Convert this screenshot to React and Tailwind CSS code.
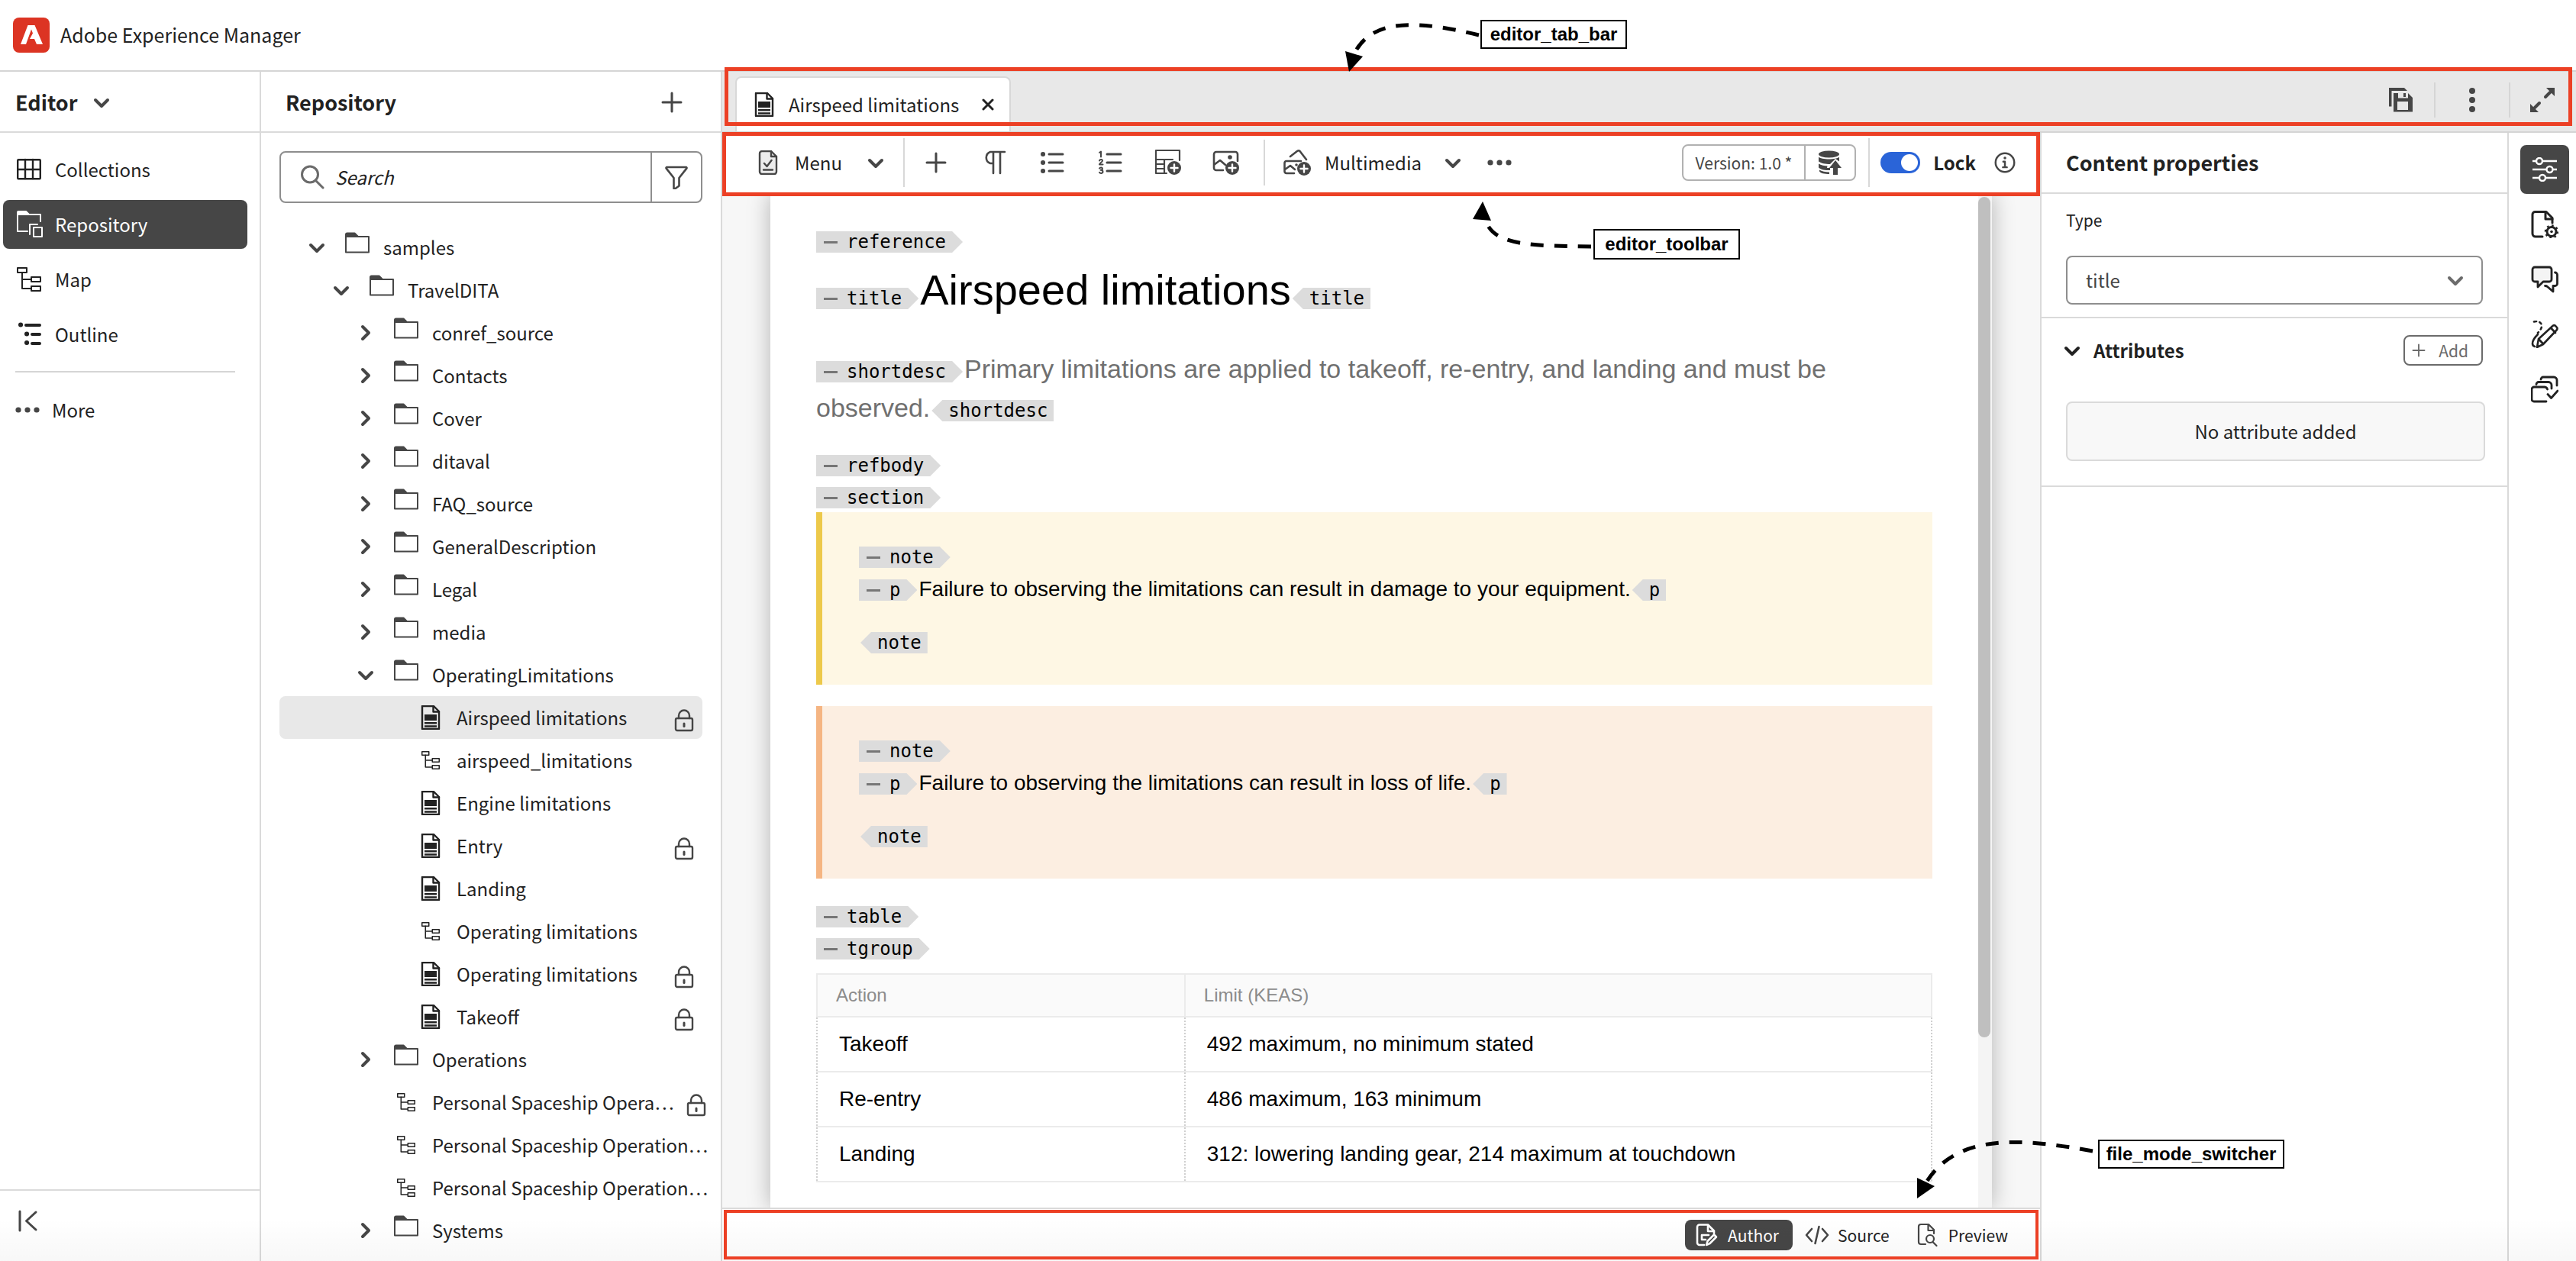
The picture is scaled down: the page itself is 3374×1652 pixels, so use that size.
import React from "react";

/* ---------- icons ---------- */

function Svg({ size = "size-8", box = 32, w = 2, children, className = "" }) {
  return (
    <svg
      viewBox={`0 0 ${box} ${box}`}
      fill="none"
      stroke="currentColor"
      strokeWidth={w}
      strokeLinecap="round"
      strokeLinejoin="round"
      aria-hidden="true"
      className={`${size} shrink-0 ${className}`}
    >
      {children}
    </svg>
  );
}

const ChevronDown = ({ className = "" }) => (
  <Svg size="size-6" box={24} w={4} className={className}>
    <path d="M4 9l8 8 8-8" />
  </Svg>
);
const ChevronRight = () => (
  <Svg size="size-6" box={24} w={4}>
    <path d="M8 4l8 8-8 8" />
  </Svg>
);
const Plus = ({ className = "", size = "size-8" }) => (
  <Svg className={className} size={size} w={3}>
    <path d="M16 4v24M4 16h24" />
  </Svg>
);
const GridIcon = () => (
  <Svg w={2.4}>
    <rect x="1.2" y="3.2" width="29.6" height="25" rx="1" />
    <path d="M11 3v25M21 3v25M1 16h30" />
  </Svg>
);
const RepoIcon = () => (
  <Svg size="h-9 w-9" box={36} w={2}>
    <path d="M1 2a1 1 0 0 1 1-1h10l4 4H1z" fill="currentColor" />
    <path d="M14 27H1V5h30v9" />
    <path d="M17 31V18h10" />
    <rect x="22" y="22" width="11" height="12" />
  </Svg>
);
const MapIcon = ({ size = "size-8" }) => (
  <Svg size={size}>
    <rect x="1" y="1" width="12" height="6" />
    <rect x="19" y="13" width="12" height="6" />
    <rect x="19" y="25" width="12" height="6" />
    <path d="M7 7v21h12M7 16h12" />
  </Svg>
);
const OutlineIcon = () => (
  <Svg w={4}>
    <path d="M12 4h18M20 16h10M20 28h10" />
    <path d="M5 3.5h.1M13 15.500h.1M13 27h.1" strokeWidth="6" />
  </Svg>
);
const Dots = ({ className = "" }) => (
  <Svg className={className}>
    <g fill="currentColor" stroke="none">
      <circle cx="4" cy="16" r="3.600" />
      <circle cx="16" cy="16" r="3.600" />
      <circle cx="28" cy="16" r="3.600" />
    </g>
  </Svg>
);
const FolderIcon = () => (
  <Svg>
    <path d="M1 3a1.500 1.500 0 0 1 1.500-1.500h10L17 6H1z" fill="currentColor" />
    <path d="M1 6h30v20.500H1z" />
  </Svg>
);
const DocIcon = () => (
  <Svg w={2.400}>
    <path d="M5 1h15l7 7v23H5z" />
    <path d="M19.500 1v7.500H27" />
    <path d="M8 23.200h16M8 27.500h16" strokeLinecap="butt" />
    <path d="M8 12h16v8H8z" fill="currentColor" stroke="none" />
  </Svg>
);
const LockIcon = () => (
  <Svg w={2.400}>
    <path d="M9 13V9.500a7 7 0 0 1 14 0V13" />
    <rect x="5" y="13" width="22" height="16" rx="2" />
    <path d="M16 20v3.500" strokeWidth="3" />
  </Svg>
);
const SearchIcon = () => (
  <Svg w={3}>
    <circle cx="13" cy="12.500" r="10.500" />
    <path d="M20.500 20.500l9.500 9.500" />
  </Svg>
);
const FilterIcon = () => (
  <Svg w={2.600}>
    <path d="M3.500 3h25a1 1 0 0 1 .8 1.600L19.500 17v10.500l-5 3.500h-2V17L2.700 4.600A1 1 0 0 1 3.500 3z" />
  </Svg>
);
const CollapseIcon = () => (
  <Svg w={3}>
    <path d="M5 3v25M26 4L13.500 15.500 26 27" />
  </Svg>
);
const CloseIcon = () => (
  <Svg size="size-4" box={16} w={3}>
    <path d="M2 2l12 12M14 2L2 14" />
  </Svg>
);
const SaveAllIcon = () => (
  <Svg w={0}>
    <g fill="currentColor" stroke="none">
      <path d="M1 0h20l4 4H4.500v20.500H1z" />
      <path fillRule="evenodd" d="M7 7h6v6.500h13V7l6 6v18.500H7zM12 18v11h14V18z" />
      <path d="M20 7h3v5h-3z" />
    </g>
  </Svg>
);
const MoreVertical = () => (
  <Svg>
    <g fill="currentColor" stroke="none">
      <circle cx="16" cy="4" r="4" />
      <circle cx="16" cy="16" r="4" />
      <circle cx="16" cy="28" r="4" />
    </g>
  </Svg>
);
const ExpandIcon = () => (
  <Svg w={4}>
    <path d="M21 0h11v11zM11 32H0V21z" fill="currentColor" stroke="none" />
    <path d="M20 12l6-6M12 20l-6 6" />
  </Svg>
);
const MenuDocIcon = () => (
  <Svg w={2.400}>
    <path d="M5 4a3 3 0 0 1 3-3h12l7 7v20a3 3 0 0 1-3 3H8a3 3 0 0 1-3-3z" fill="#ececec" />
    <path d="M20 1v7h7M11 17l3.500 4 6-8M10 25.500h12" />
  </Svg>
);
const PilcrowIcon = () => (
  <Svg w={2.600}>
    <path d="M30 2H11a8 8 0 0 0 0 15h4M15 2v28M24 2v28" />
  </Svg>
);
const BulletIcon = () => (
  <Svg w={3}>
    <path d="M12 5h18M12 16h18M12 27h18" />
    <path d="M4 5h.1M4 16h.1M4 27h.1" strokeWidth="6" />
  </Svg>
);
const NumberIcon = () => (
  <Svg w={2}>
    <path d="M12 5h18M12 16h18M12 27h18" strokeWidth="3" />
    <path d="M2 3l2-1.500V8.500M2 13.500c.5-2 4-2 4 0 0 2-4 3-4 5h4.500M2 23.500c1-1.500 4-1.500 4 .5 0 1.500-1.500 1.800-2.500 1.800 1 0 3 .3 3 2.200 0 2.300-3.500 2.500-4.500.8" />
  </Svg>
);
const PlusBadge = ({ cx, cy }) => (
  <>
    <circle cx={cx} cy={cy} r="9" fill="currentColor" stroke="none" />
    <path d={`M${cx - 4.5} ${cy}h9M${cx} ${cy - 4.5}v9`} stroke="#fff" strokeWidth="2.4" />
  </>
);
const TableIcon = () => (
  <Svg size="size-9" box={36} w={2.200}>
    <path d="M16 32H2V2h31v13M2 14h22M13 14v18M2 20h11M2 26h11" />
    <PlusBadge cx={26} cy={25} />
  </Svg>
);
const ImageIcon = () => (
  <Svg size="size-9" box={36} w={2.600}>
    <path d="M14 28H5a3 3 0 0 1-3-3V7a3 3 0 0 1 3-3h25a3 3 0 0 1 3 3v9M2 21l8-6 7 6" />
    <circle cx="23" cy="11" r="2.800" fill="currentColor" stroke="none" />
    <PlusBadge cx={26} cy={25} />
  </Svg>
);
const MultimediaIcon = () => (
  <Svg size="size-9" box={36} w={2.600}>
    <path d="M9 10l9-7q2-1.500 3.500 0L30 14" />
    <path d="M14 32H4a2.500 2.500 0 0 1-2.500-2.500v-11A2.500 2.500 0 0 1 4 16h19M2 27l7-5 6 5" />
    <circle cx="17" cy="21" r="1.800" fill="currentColor" stroke="none" />
    <PlusBadge cx={27} cy={26} />
  </Svg>
);
const DatabaseUpIcon = () => (
  <Svg w={0}>
    <g fill="currentColor" stroke="none">
      <ellipse cx="14.500" cy="5" rx="13.500" ry="4.500" />
      <path d="M1 8.500c3 4 24 4 27 0v6l-5-3.500-7 7c-6 0-12-1-15-3.500z" />
      <path d="M1 17.500c3 2 8 3 11.500 3L12 23h4v3c-7 0-12-.5-15-3.500z" />
      <path d="M2 25.500c3 2 8 3 13 3V31C9 31 3 30 2 27.500z" />
      <path d="M23 13l8 10h-5v9h-6v-9h-5z" />
    </g>
  </Svg>
);
const InfoIcon = () => (
  <Svg size="size-7" w={2.800}>
    <circle cx="16" cy="16" r="14" />
    <path d="M16 9h.1" strokeWidth="4" />
    <path d="M13.500 14.500H16V23M13 23h6" />
  </Svg>
);
const SlidersIcon = () => (
  <Svg w={2.400}>
    <path d="M0 5h5M13 5h19M0 16h18M27 16h5M0 27h9M17 27h15" />
    <circle cx="9" cy="5" r="4" />
    <circle cx="22.500" cy="16" r="4" />
    <circle cx="13" cy="27" r="4" />
  </Svg>
);
const PageGearIcon = () => (
  <Svg size="size-9" box={36} w={3}>
    <path d="M15 34H6a4 4 0 0 1-4-4V5a3.500 3.500 0 0 1 3.500-3.500H20l8 8V16" />
    <path d="M19 2v9h9" />
    <circle cx="27" cy="27.500" r="6" />
    <circle cx="27" cy="27.500" r="7.800" strokeDasharray="2.500 3.600" strokeLinecap="butt" />
    <circle cx="27" cy="27.500" r="1.800" fill="currentColor" stroke="none" />
  </Svg>
);
const ChatIcon = () => (
  <Svg size="size-9" box={36} w={2.800}>
    <path d="M5 2h19a3 3 0 0 1 3 3v13a3 3 0 0 1-3 3h-8l-7 7v-7H5a3 3 0 0 1-3-3V5a3 3 0 0 1 3-3z" fill="#f4f4f4" />
    <path d="M31.500 9A3 3 0 0 1 34.500 12v11.500a3 3 0 0 1-3 3h-2.500V34l-7.500-6.500q-1-1-3-1" />
  </Svg>
);
const PencilPathIcon = () => (
  <Svg size="size-9" box={36} w={2.600}>
    <path d="M10 24L29 6.500q1.500-1 3 .3l2 2.200q1 1.500 0 3L16 31l-8 4zM26 9.500l6 6.500M10 24l6 6.500" />
    <path d="M4 1.500c6-1.500 10 1 10 5.500 0 4-3 7-5 9" strokeDasharray="3 4.500" />
    <path d="M9 18c-4 4-7 8-7 12 0 2 1 3.500 3 4" />
  </Svg>
);
const LayersCheckIcon = () => (
  <Svg size="size-9" box={36} w={2.800}>
    <path d="M20 34H4a3 3 0 0 1-3-3V18a3 3 0 0 1 3-3h14a4 4 0 0 1 3.500 3" />
    <path d="M7 11.500A3 3 0 0 1 10 8.500h13a4 4 0 0 1 4 4V17" />
    <path d="M13 5a3 3 0 0 1 3-3h14a4 4 0 0 1 4 4v7" />
    <path d="M22 24.500l4.500 5L35 20" />
  </Svg>
);
const AuthorIcon = () => (
  <Svg w={2.600}>
    <path d="M13 29H7a3 3 0 0 1-3-3V5.500a3 3 0 0 1 3-3h11l8 8" />
    <path d="M18 3v8h8v3M10 16h9M10 22h5M10 16v6" />
    <path d="M16 29l1.500-5L26 15.500l3 3L20.500 27z" />
  </Svg>
);
const CodeIcon = () => (
  <Svg w={2.600}>
    <path d="M9 8l-7 8 7 8M23 8l7 8-7 8M18.500 5l-5 22" />
  </Svg>
);
const PreviewIcon = () => (
  <Svg w={2.200}>
    <path d="M13 28H7a3 3 0 0 1-3-3V5a3 3 0 0 1 3-3h10l7 7v5M16.500 2v8H24" />
    <circle cx="19" cy="21" r="5" />
    <path d="M22.500 25l5 5" />
  </Svg>
);

/* ---------- annotations ---------- */

function Frame({ className }) {
  return <div aria-hidden="true" className={`pointer-events-none absolute z-20 border-[#ec4025] ${className}`} />;
}

function Callout({ className, children }) {
  return (
    <div
      className={`absolute z-30 flex items-center justify-center border-2 border-black bg-white font-['Liberation_Sans',sans-serif] text-2xl font-bold whitespace-nowrap text-black ${className}`}
    >
      {children}
    </div>
  );
}

function Arrow({ className, box, path, head }) {
  return (
    <svg viewBox={box} aria-hidden="true" className={`pointer-events-none absolute z-30 ${className}`}>
      <path d={path} fill="none" stroke="#000" strokeWidth="5" strokeDasharray="17 14" />
      <path d={head} fill="#000" />
    </svg>
  );
}

/* ---------- left side ---------- */

function NavItem({ icon, label, active }) {
  return (
    <button
      type="button"
      className={`flex h-16 w-full items-center gap-[18px] rounded-lg pl-[18px] ${
        active ? "bg-[#464646] text-white" : "text-[#222]"
      }`}
    >
      <span className="flex w-8 shrink-0 justify-start">{icon}</span>
      {label}
    </button>
  );
}

const levelPad = ["pl-[33px]", "pl-[65px]", "pl-[97px]", "pl-[129px]"];

const tree = [
  { level: 0, kind: "folder", open: true, label: "samples" },
  { level: 1, kind: "folder", open: true, label: "TravelDITA" },
  { level: 2, kind: "folder", label: "conref_source" },
  { level: 2, kind: "folder", label: "Contacts" },
  { level: 2, kind: "folder", label: "Cover" },
  { level: 2, kind: "folder", label: "ditaval" },
  { level: 2, kind: "folder", label: "FAQ_source" },
  { level: 2, kind: "folder", label: "GeneralDescription" },
  { level: 2, kind: "folder", label: "Legal" },
  { level: 2, kind: "folder", label: "media" },
  { level: 2, kind: "folder", open: true, label: "OperatingLimitations" },
  { level: 3, kind: "doc", label: "Airspeed limitations", locked: true, active: true },
  { level: 3, kind: "map", label: "airspeed_limitations" },
  { level: 3, kind: "doc", label: "Engine limitations" },
  { level: 3, kind: "doc", label: "Entry", locked: true },
  { level: 3, kind: "doc", label: "Landing" },
  { level: 3, kind: "map", label: "Operating limitations" },
  { level: 3, kind: "doc", label: "Operating limitations", locked: true },
  { level: 3, kind: "doc", label: "Takeoff", locked: true },
  { level: 2, kind: "folder", label: "Operations" },
  { level: 2, kind: "map", label: "Personal Spaceship Opera…", locked: true, wide: true },
  { level: 2, kind: "map", label: "Personal Spaceship Operation…", wide: true },
  { level: 2, kind: "map", label: "Personal Spaceship Operation…", wide: true },
  { level: 2, kind: "folder", label: "Systems" },
];

function TreeRow({ level, kind, open, label, locked, active, wide }) {
  return (
    <li className={wide ? "-mr-4" : ""}>
      <button
        type="button"
        className={`flex h-14 w-full items-center rounded-lg pr-2 text-left ${levelPad[level]} ${active ? "bg-[#e8e8e8]" : ""}`}
      >
        <span className="mr-[21px] flex w-8 shrink-0 justify-center text-[#464646]">
          {kind === "folder" && (open ? <ChevronDown /> : <ChevronRight />)}
        </span>
        <span className="mr-[18px] flex w-8 shrink-0 justify-center">
          {kind === "folder" && (
            <span className="-mt-2 text-[#464646]">
              <FolderIcon />
            </span>
          )}
          {kind === "doc" && <DocIcon />}
          {kind === "map" && <MapIcon size="size-6" />}
        </span>
        <span className="grow whitespace-nowrap">{label}</span>
        {locked && (
          <span className="mt-2 text-[#464646]">
            <LockIcon />
          </span>
        )}
      </button>
    </li>
  );
}

/* ---------- document ---------- */

function OpenTag({ name }) {
  return (
    <span className="mr-0.5 inline-flex h-7 items-baseline bg-[#dcdcdc] pr-[22px] pl-[10px] font-['DejaVu_Sans_Mono',monospace] text-2xl leading-7 text-black [clip-path:polygon(0_0,calc(100%_-_14px)_0,100%_50%,calc(100%_-_14px)_100%,0_100%)]">
      <span className="mr-3 h-[3px] w-[18px] self-center bg-[#767676]" />
      {name}
    </span>
  );
}

function CloseTag({ name }) {
  return (
    <span className="ml-0.5 inline-flex h-7 items-baseline bg-[#dcdcdc] pr-2 pl-[22px] font-['DejaVu_Sans_Mono',monospace] text-2xl leading-7 text-black [clip-path:polygon(14px_0,100%_0,100%_100%,14px_100%,0_50%)]">
      {name}
    </span>
  );
}

function Note({ text, className }) {
  return (
    <div className={`flex flex-col items-start border-l-8 pt-[45px] pb-[41px] pl-12 ${className}`}>
      <OpenTag name="note" />
      <p className="mt-3.5 flex h-7 items-baseline text-[28px] leading-7 text-black">
        <OpenTag name="p" />
        {text}
        <CloseTag name="p" />
      </p>
      <div className="mt-[42px] flex">
        <CloseTag name="note" />
      </div>
    </div>
  );
}

const limits = [
  ["Takeoff", "492 maximum, no minimum stated"],
  ["Re-entry", "486 maximum, 163 minimum"],
  ["Landing", "312: lowering landing gear, 214 maximum at touchdown"],
];

function Document() {
  return (
    <article className="flex grow flex-col bg-white px-[60px] pt-[49px] font-['Liberation_Sans',Arial,sans-serif] text-black">
      <div className="flex">
        <OpenTag name="reference" />
      </div>
      <h1 className="mt-[7px] text-[56px] leading-[84px]">
        <OpenTag name="title" />
        Airspeed limitations
        <CloseTag name="title" />
      </h1>
      <p className="mt-9 text-[34px] leading-[51px] text-[#707070]">
        <OpenTag name="shortdesc" />
        Primary limitations are applied to takeoff, re-entry, and landing and must be
        <br />
        observed.
        <CloseTag name="shortdesc" />
      </p>
      <div className="mt-9 flex flex-col items-start gap-3.5">
        <OpenTag name="refbody" />
        <OpenTag name="section" />
      </div>
      <div className="mt-[5px] flex flex-col gap-7">
        <Note
          className="border-[#edc94a] bg-[#fef7e4]"
          text="Failure to observing the limitations can result in damage to your equipment."
        />
        <Note
          className="border-[#f5b583] bg-[#fceee1]"
          text="Failure to observing the limitations can result in loss of life."
        />
      </div>
      <div className="mt-9 flex flex-col items-start gap-3.5">
        <OpenTag name="table" />
        <OpenTag name="tgroup" />
      </div>
      <table className="mt-[18px] w-full table-fixed border-collapse text-left text-[28px]">
        <thead>
          <tr className="h-14 bg-[#fafafa] text-2xl text-[#8b8b8b]">
            <th className="w-[33%] border-2 border-[#ebebeb] pl-6 font-normal">Action</th>
            <th className="border-2 border-[#ebebeb] pl-6 font-normal">Limit (KEAS)</th>
          </tr>
        </thead>
        <tbody>
          {limits.map(([action, limit]) => (
            <tr key={action} className="h-[72px]">
              <td className="border-x-2 border-y-2 border-x-[#d0d0d0] border-y-[#ebebeb] pl-7 [border-left-style:dotted] [border-right-style:dotted]">
                {action}
              </td>
              <td className="border-x-2 border-y-2 border-x-[#d0d0d0] border-y-[#ebebeb] pl-7 [border-left-style:dotted] [border-right-style:dotted]">
                {limit}
              </td>
            </tr>
          ))}
        </tbody>
      </table>
    </article>
  );
}

/* ---------- workspace ---------- */

function TabBar() {
  return (
    <div className="relative flex h-20 shrink-0 items-stretch border-b-2 border-[#d5d5d5] bg-[#e8e8e8] pl-[17px]">
      <div className="mt-1.5 flex items-center rounded-t-lg border-2 border-b-0 border-[#d8d8d8] bg-white px-5">
        <DocIcon />
        <span className="mr-[30px] ml-4 whitespace-nowrap">Airspeed limitations</span>
        <button type="button" aria-label="Close tab">
          <CloseIcon />
        </button>
      </div>
      <div className="mb-1 ml-auto flex items-center text-[#464646]">
        <button type="button" aria-label="Save all" className="px-7">
          <SaveAllIcon />
        </button>
        <span className="h-[46px] w-0.5 bg-[#d5d5d5]" />
        <button type="button" aria-label="More options" className="px-8">
          <MoreVertical />
        </button>
        <span className="h-[46px] w-0.5 bg-[#d5d5d5]" />
        <button type="button" aria-label="Expand" className="pr-7 pl-[26px]">
          <ExpandIcon />
        </button>
      </div>
      <Frame className="-top-1.5 right-[5px] bottom-[7px] left-[3px] border-[5px]" />
      <Callout className="-top-[68px] left-[993px] h-[38px] w-[192px]">editor_tab_bar</Callout>
      <Arrow
        className="-top-[74px] left-[804px] h-[80px] w-[200px]"
        box="1750 20 200 80"
        path="M1937 46C1862 28 1800 22 1775 68"
        head="M1762 67L1785 74L1767 94z"
      />
    </div>
  );
}

const insertTools = [
  ["Insert element", <Plus />],
  ["Paragraph", <PilcrowIcon />],
  ["Bulleted list", <BulletIcon />],
  ["Numbered list", <NumberIcon />],
  ["Table", <TableIcon />],
  ["Image", <ImageIcon />],
];

function Toolbar() {
  return (
    <div
      role="toolbar"
      aria-label="Editor toolbar"
      className="relative flex h-20 shrink-0 items-center border-b-2 border-[#dadada] bg-white pr-8 pl-11 text-[#464646]"
    >
      <button type="button" className="flex items-center">
        <MenuDocIcon />
        <span className="mr-8 ml-[19px] text-[#222]">Menu</span>
        <ChevronDown />
      </button>
      <span className="ml-6 h-16 w-0.5 bg-[#d8d8d8]" />
      <div className="ml-[23px] flex items-center gap-10">
        {insertTools.map(([label, icon]) => (
          <button key={label} type="button" aria-label={label} className="flex size-9 items-center justify-center">
            {icon}
          </button>
        ))}
      </div>
      <span className="ml-[31px] h-[60px] w-0.5 bg-[#d8d8d8]" />
      <button type="button" className="ml-6 flex items-center">
        <MultimediaIcon />
        <span className="mr-[29px] ml-[18px] text-[#222]">Multimedia</span>
        <ChevronDown />
      </button>
      <button type="button" aria-label="More tools" className="ml-[33px]">
        <Dots />
      </button>
      <div className="ml-auto flex h-12 items-stretch rounded-lg border-2 border-[#b1b1b1]">
        <button type="button" className="px-4 text-[21px] whitespace-nowrap">
          Version: 1.0 *
        </button>
        <button type="button" aria-label="Save as new version" className="border-l-2 border-[#b1b1b1] px-4">
          <DatabaseUpIcon />
        </button>
      </div>
      <span className="mr-3.5 ml-4 h-16 w-0.5 bg-[#d8d8d8]" />
      <label className="flex items-center gap-[17px] font-bold text-[#222]">
        <input
          type="checkbox"
          role="switch"
          defaultChecked
          className="relative h-7 w-[52px] appearance-none rounded-full bg-[#2a64d8] before:absolute before:top-[3px] before:right-[3px] before:size-[22px] before:rounded-full before:bg-white"
        />
        Lock
      </label>
      <button type="button" aria-label="Lock information" className="ml-6">
        <InfoIcon />
      </button>
      <Frame className="inset-x-0 -top-px -bottom-[5px] border-[5px]" />
      <Callout className="top-[126px] left-[1141px] h-10 w-[192px]">editor_toolbar</Callout>
      <Arrow
        className="top-[86px] left-[974px] h-[70px] w-[170px]"
        box="1920 260 170 70"
        path="M2084 323C2010 322 1962 322 1948 294"
        head="M1929 287L1953 289L1942 264z"
      />
    </div>
  );
}

function ModeBar() {
  return (
    <div className="relative flex h-[70px] shrink-0 items-center justify-end border-t-2 border-[#dadada] bg-white pr-[42px] text-[21px] text-[#222]">
      <button type="button" className="flex h-10 items-center gap-3 rounded-lg bg-[#464646] pr-[18px] pl-3 text-white">
        <AuthorIcon />
        Author
      </button>
      <button type="button" className="flex h-10 items-center gap-[11px] px-4">
        <span className="text-[#464646]">
          <CodeIcon />
        </span>
        Source
      </button>
      <button type="button" className="flex h-10 items-center gap-[11px] pl-[18px]">
        <span className="text-[#464646]">
          <PreviewIcon />
        </span>
        Preview
      </button>
      <Frame className="inset-x-0.5 top-px bottom-0.5 border-4" />
      <Callout className="-top-[91px] left-[1802px] h-[38px] w-[244px]">file_mode_switcher</Callout>
      <Arrow
        className="-top-[104px] left-[1554px] h-[100px] w-[250px]"
        box="2500 1480 250 100"
        path="M2741 1508C2642 1490 2562 1486 2523 1549"
        head="M2511 1543L2534 1554L2511 1570z"
      />
    </div>
  );
}

function PropertiesPanel() {
  return (
    <aside className="flex w-[614px] shrink-0 flex-col border-x-2 border-[#dadada] bg-white text-[#222]">
      <h2 className="flex h-20 items-center border-b-2 border-[#dadada] pl-8 text-[27px] font-bold">Content properties</h2>
      <div className="border-b-2 border-[#dadada] px-8 pt-5 pb-4">
        <label htmlFor="type" className="block h-[61px] text-[21px] leading-7">
          Type
        </label>
        <div className="relative flex items-center">
          <select
            id="type"
            defaultValue="title"
            className="h-16 w-full appearance-none rounded-lg border-2 border-[#8e8e8e] bg-white pl-6 text-[#464646]"
          >
            <option value="title">title</option>
            <option value="shortdesc">shortdesc</option>
          </select>
          <ChevronDown className="pointer-events-none absolute right-6 text-[#6b6b6b]" />
        </div>
      </div>
      <section className="border-b-2 border-[#dadada] pr-[29px] pb-8 pl-8">
        <div className="flex h-[109px] items-start pt-[22px] pr-[3px]">
          <button type="button" className="flex h-10 items-center gap-4 font-bold">
            <ChevronDown className="-ml-1" />
            Attributes
          </button>
          <button
            type="button"
            className="ml-auto flex h-10 items-center gap-4 rounded-lg border-2 border-[#6b6b6b] pr-[17px] pl-2 text-[21px] text-[#6b6b6b]"
          >
            <Plus size="size-5" />
            Add
          </button>
        </div>
        <div className="flex h-[78px] items-center justify-center rounded-lg border-2 border-[#dadada] bg-[#f8f8f8]">
          No attribute added
        </div>
      </section>
    </aside>
  );
}

function Rail() {
  const items = [
    ["Page properties", <PageGearIcon />],
    ["Comments", <ChatIcon />],
    ["Track changes", <PencilPathIcon />],
    ["Review", <LayersCheckIcon />],
  ];
  return (
    <aside className="flex w-[88px] shrink-0 flex-col items-center gap-2 bg-white pt-4 pl-1.5 text-[#222]">
      <button
        type="button"
        aria-label="Content properties"
        className="flex size-16 items-center justify-center rounded-lg bg-[#464646] text-white"
      >
        <SlidersIcon />
      </button>
      {items.map(([label, icon]) => (
        <button key={label} type="button" aria-label={label} className="flex size-16 items-center justify-center">
          {icon}
        </button>
      ))}
    </aside>
  );
}

export default function App() {
  return (
    <div className="relative flex h-screen flex-col overflow-hidden bg-white font-['Noto_Sans_CJK_SC','Noto_Sans',sans-serif] text-2xl text-[#222]">
      <header className="flex h-[94px] shrink-0 items-center gap-3.5 border-b-2 border-[#d5d5d5] pl-[17px]">
        <svg viewBox="0 0 48 46" aria-hidden="true" className="h-[46px] w-12">
          <rect width="48" height="46" rx="8" fill="#dc3423" />
          <path d="M19.500 10h9L39 35h-8l-3-7h-6l4-7.500-2-5L17 35h-7z" fill="#fff" />
        </svg>
        <span className="text-[25px]">Adobe Experience Manager</span>
      </header>

      <div className="flex min-h-0 grow">
        <nav className="flex w-[342px] shrink-0 flex-col border-r-2 border-[#dadada]">
          <button
            type="button"
            className="flex h-20 items-center gap-5 border-b-2 border-[#dadada] pt-0.5 pl-5 text-[27px] font-bold"
          >
            Editor
            <span className="text-[#464646]">
              <ChevronDown />
            </span>
          </button>
          <div className="flex flex-col gap-2 pt-4 pr-4 pl-1">
            <NavItem icon={<GridIcon />} label="Collections" />
            <NavItem icon={<RepoIcon />} label="Repository" active />
            <NavItem icon={<MapIcon />} label="Map" />
            <NavItem icon={<OutlineIcon />} label="Outline" />
          </div>
          <hr className="mt-4 mr-8 ml-5 border-t-2 border-[#d5d5d5]" />
          <button type="button" className="mt-[17px] flex h-16 items-center gap-4 pl-5">
            <Dots className="text-[#464646]" />
            More
          </button>
          <div className="mt-auto flex h-[94px] items-start border-t-2 border-[#dadada] pt-6 pl-[21px] text-[#464646]">
            <button type="button" aria-label="Collapse navigation">
              <CollapseIcon />
            </button>
          </div>
        </nav>

        <section className="flex w-[604px] shrink-0 flex-col border-r-2 border-[#dadada]">
          <div className="flex h-20 shrink-0 items-center justify-between border-b-2 border-[#dadada] pt-0.5 pr-12 pl-8">
            <h2 className="text-[27px] font-bold">Repository</h2>
            <button type="button" aria-label="Add to repository">
              <Plus className="text-[#464646]" />
            </button>
          </div>
          <div className="mx-6 mt-6 flex h-[68px] shrink-0 items-stretch rounded-lg border-2 border-[#8e8e8e] text-[#464646]">
            <span className="flex items-center pl-[25px] text-[#6b6b6b]">
              <SearchIcon />
            </span>
            <input
              type="search"
              aria-label="Search"
              placeholder="Search"
              className="min-w-0 grow bg-transparent pl-3.5 italic outline-none placeholder:text-[#222]"
            />
            <button
              type="button"
              aria-label="Filter"
              className="flex w-[66px] items-center justify-center border-l-2 border-[#8e8e8e]"
            >
              <FilterIcon />
            </button>
          </div>
          <ul className="mx-6 mt-[30px]">
            {tree.map((row, i) => (
              <TreeRow key={i} {...row} />
            ))}
          </ul>
        </section>

        <main className="flex min-w-0 grow flex-col">
          <TabBar />
          <div className="flex min-h-0 grow">
            <div className="flex min-w-0 grow flex-col">
              <Toolbar />
              <div className="flex min-h-0 grow overflow-hidden bg-[#f7f7f7] px-[63px]">
                <div className="flex grow shadow-[0_0_28px_rgba(0,0,0,0.28)]">
                  <Document />
                  <div className="w-[18px] shrink-0 bg-[#f4f4f4] pt-1">
                    <div className="h-[1101px] w-4 rounded-full bg-[#bfbfbf]" />
                  </div>
                </div>
              </div>
              <ModeBar />
            </div>
            <PropertiesPanel />
            <Rail />
          </div>
        </main>
      </div>
      <div className="pointer-events-none absolute inset-x-0 bottom-0 h-14 bg-linear-to-b from-transparent to-black/3" />
    </div>
  );
}
